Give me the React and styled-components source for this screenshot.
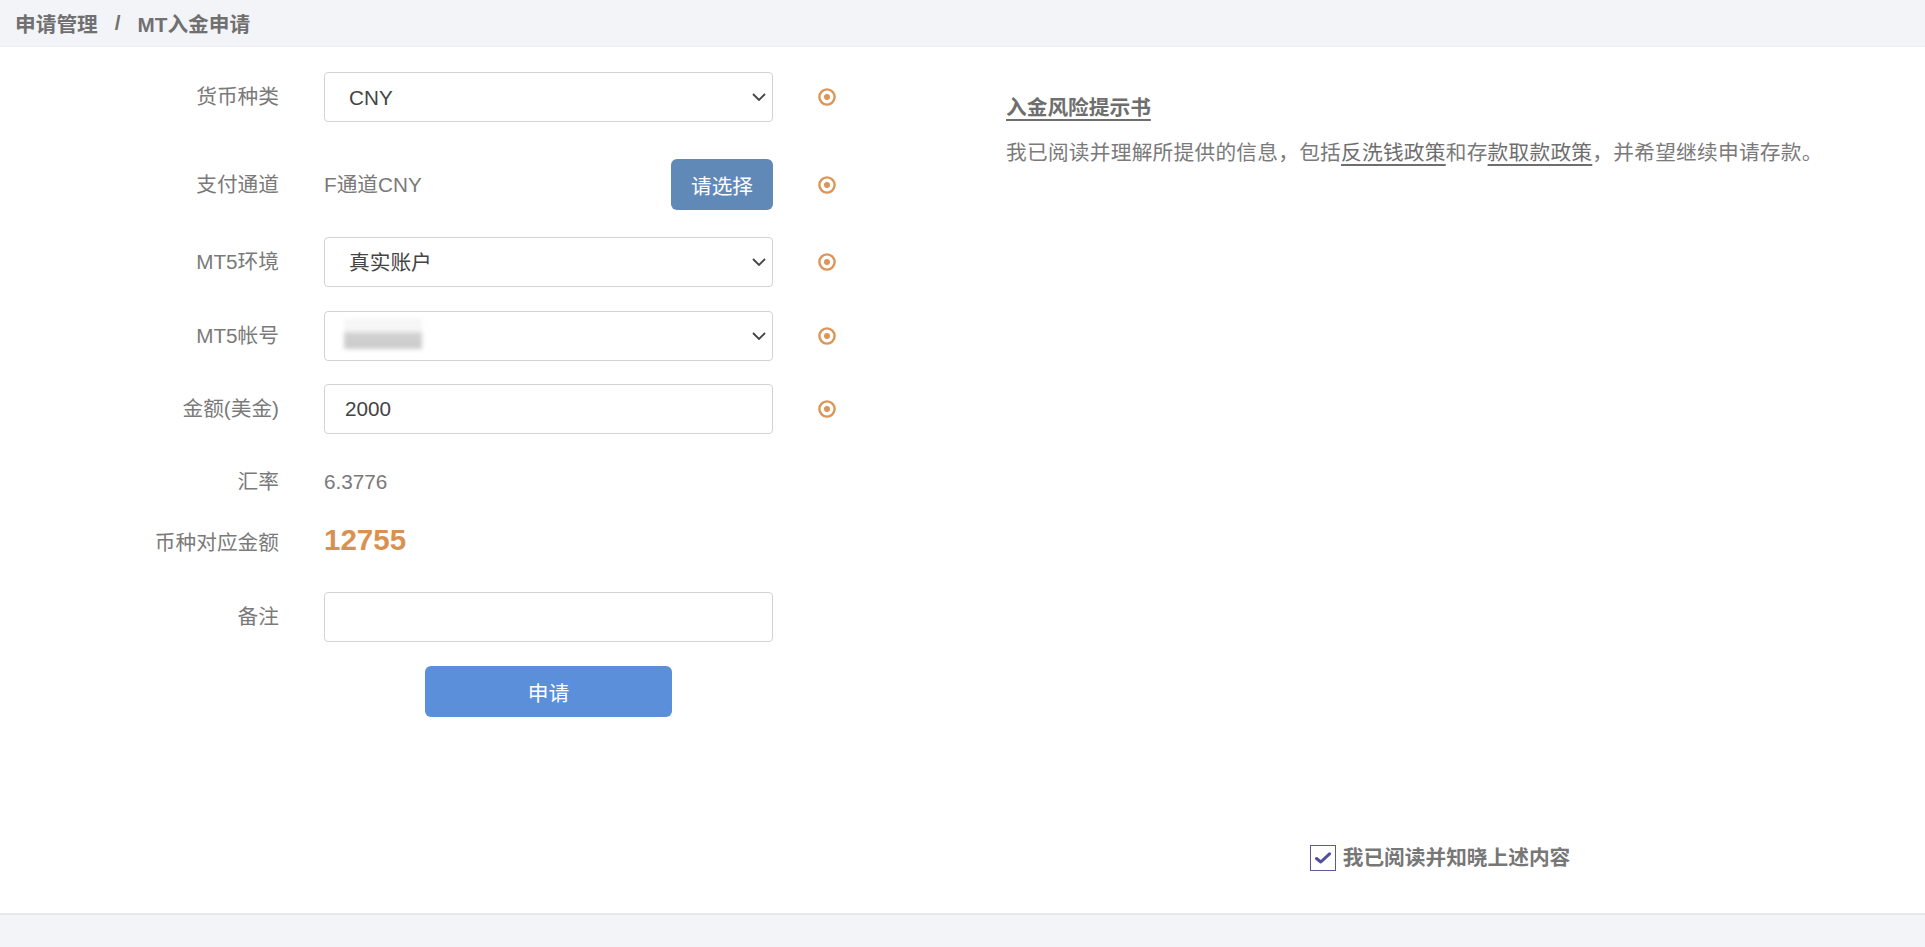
import styled, { createGlobalStyle } from 'styled-components';

const GlobalStyle = createGlobalStyle`
  html, body {
    margin: 0;
    padding: 0;
  }
  body {
    font-family: 'Liberation Sans', 'Noto Sans CJK SC', sans-serif;
    background: #ffffff;
    color: #777777;
  }
  * {
    box-sizing: border-box;
  }
`;

const Marker = () => (
  <Styled.Marker viewBox="0 0 18 18" aria-hidden="true">
    <circle cx="9" cy="9" r="7.6" fill="none" stroke="#dc9556" strokeWidth="2.4" />
    <circle cx="9" cy="9" r="3" fill="#dc9556" />
  </Styled.Marker>
);

const Chevron = () => (
  <Styled.Chevron viewBox="0 0 14 8" aria-hidden="true">
    <polyline points="1,1 7,7 13,1" fill="none" stroke="#444" strokeWidth="1.8" />
  </Styled.Chevron>
);

const SelectField = ({ value, children }) => (
  <Styled.SelectWrap>
    <Styled.Select defaultValue={value}>
      <option value={value}>{value}</option>
    </Styled.Select>
    {children}
    <Chevron />
  </Styled.SelectWrap>
);

const App = () => {
  return (
    <>
      <GlobalStyle />
      <Styled.Page>
        <Styled.Header>
          <span>申请管理</span>
          <Styled.Sep>/</Styled.Sep>
          <span>MT入金申请</span>
        </Styled.Header>

        <Styled.Main>
          <Styled.FormColumn>
            <Styled.Row $top={0}>
              <Styled.Label>货币种类</Styled.Label>
              <Styled.Field>
                <SelectField value="CNY" />
              </Styled.Field>
              <Marker />
            </Styled.Row>

            <Styled.Row $top={37} $height={51}>
              <Styled.Label>支付通道</Styled.Label>
              <Styled.Field>
                <Styled.Text>F通道CNY</Styled.Text>
                <Styled.PickButton type="button">请选择</Styled.PickButton>
              </Styled.Field>
              <Marker />
            </Styled.Row>

            <Styled.Row $top={27}>
              <Styled.Label>MT5环境</Styled.Label>
              <Styled.Field>
                <SelectField value="真实账户" />
              </Styled.Field>
              <Marker />
            </Styled.Row>

            <Styled.Row $top={24}>
              <Styled.Label>MT5帐号</Styled.Label>
              <Styled.Field>
                <SelectField value="">
                  <Styled.Blurred />
                </SelectField>
              </Styled.Field>
              <Marker />
            </Styled.Row>

            <Styled.Row $top={23}>
              <Styled.Label>金额(美金)</Styled.Label>
              <Styled.Field>
                <Styled.Input defaultValue="2000" />
              </Styled.Field>
              <Marker />
            </Styled.Row>

            <Styled.Row $top={23}>
              <Styled.Label>汇率</Styled.Label>
              <Styled.Field>
                <Styled.Text>6.3776</Styled.Text>
              </Styled.Field>
            </Styled.Row>

            <Styled.Row $top={11}>
              <Styled.Label>币种对应金额</Styled.Label>
              <Styled.Field>
                <Styled.Amount>12755</Styled.Amount>
              </Styled.Field>
            </Styled.Row>

            <Styled.Row $top={24}>
              <Styled.Label>备注</Styled.Label>
              <Styled.Field>
                <Styled.Input defaultValue="" />
              </Styled.Field>
            </Styled.Row>

            <Styled.Row $top={24} $height={51}>
              <Styled.Label />
              <Styled.Field $center>
                <Styled.SubmitButton type="button">申请</Styled.SubmitButton>
              </Styled.Field>
            </Styled.Row>
          </Styled.FormColumn>

          <Styled.InfoColumn>
            <Styled.Title>入金风险提示书</Styled.Title>
            <Styled.Paragraph>
              我已阅读并理解所提供的信息，包括<Styled.Link>反洗钱政策</Styled.Link>和存
              <Styled.Link>款取款政策</Styled.Link>，并希望继续申请存款。
            </Styled.Paragraph>
            <Styled.Agree>
              <Styled.CheckBox>
                <svg viewBox="0 0 16 12" width="16" height="12" aria-hidden="true">
                  <polyline
                    points="1.5,6.5 5.8,10 14.5,1.8"
                    fill="none"
                    stroke="#4f4f9c"
                    strokeWidth="3"
                    strokeLinecap="round"
                    strokeLinejoin="round"
                  />
                </svg>
              </Styled.CheckBox>
              <Styled.AgreeText>我已阅读并知晓上述内容</Styled.AgreeText>
            </Styled.Agree>
          </Styled.InfoColumn>
        </Styled.Main>

        <Styled.Footer />
      </Styled.Page>
    </>
  );
};

const Styled = {
  Page: styled.div`
    min-height: 100vh;
    display: flex;
    flex-direction: column;
  `,
  Header: styled.header`
    height: 47px;
    flex: none;
    display: flex;
    align-items: center;
    padding-left: 15px;
    padding-bottom: 1px;
    background: #f3f4f8;
    border-bottom: 1px solid #ecedf0;
    font-size: 20.7px;
    font-weight: bold;
    color: #707070;
  `,
  Sep: styled.span`
    margin: 0 17px;
  `,
  Main: styled.main`
    flex: 1;
    display: flex;
    background: #ffffff;
  `,
  FormColumn: styled.section`
    width: 1006px;
    flex: none;
    padding-top: 25px;
  `,
  Row: styled.div`
    display: flex;
    align-items: center;
    height: ${(p) => p.$height || 50}px;
    margin-top: ${(p) => p.$top}px;
  `,
  Label: styled.label`
    width: 279px;
    flex: none;
    text-align: right;
    font-size: 20.7px;
    color: #7a7a7a;
    line-height: 30px;
  `,
  Field: styled.div`
    width: 449px;
    height: 100%;
    margin-left: 45px;
    display: flex;
    align-items: center;
    justify-content: ${(p) => (p.$center ? 'center' : 'space-between')};
  `,
  Marker: styled.svg`
    width: 18px;
    height: 18px;
    margin-left: 45px;
    flex: none;
  `,
  SelectWrap: styled.div`
    position: relative;
    width: 100%;
    height: 100%;
  `,
  Select: styled.select`
    appearance: none;
    width: 100%;
    height: 100%;
    padding: 0 40px 0 24px;
    border: 1px solid #d3d3d3;
    border-radius: 4px;
    background: #ffffff;
    font-family: 'Liberation Sans', 'Noto Sans CJK SC', sans-serif;
    font-size: 20.7px;
    color: #444444;
    outline: none;
  `,
  Chevron: styled.svg`
    position: absolute;
    right: 7px;
    top: 21px;
    width: 14px;
    height: 8px;
    pointer-events: none;
  `,
  Blurred: styled.span`
    position: absolute;
    left: 20px;
    top: 8px;
    width: 78px;
    height: 30px;
    background: linear-gradient(
      to bottom,
      rgba(235, 235, 235, 0.5) 0%,
      rgba(238, 238, 238, 0.5) 40%,
      #d2d2d2 48%,
      #cbcbcb 100%
    );
    filter: blur(2px);
    pointer-events: none;
  `,
  Input: styled.input`
    width: 100%;
    height: 100%;
    padding: 0 20px;
    border: 1px solid #d3d3d3;
    border-radius: 4px;
    font-family: 'Liberation Sans', 'Noto Sans CJK SC', sans-serif;
    font-size: 20.7px;
    color: #444444;
    outline: none;
  `,
  Text: styled.span`
    font-size: 20.7px;
    color: #7a7a7a;
    line-height: 30px;
  `,
  Amount: styled.span`
    font-size: 29.5px;
    font-weight: bold;
    color: #d9914f;
    line-height: 34px;
    padding-bottom: 7px;
  `,
  PickButton: styled.button`
    width: 102px;
    height: 51px;
    border: none;
    border-radius: 6px;
    background: #6189b8;
    color: #ffffff;
    font-family: 'Liberation Sans', 'Noto Sans CJK SC', sans-serif;
    font-size: 20.7px;
    cursor: pointer;
  `,
  SubmitButton: styled.button`
    width: 247px;
    height: 51px;
    border: none;
    border-radius: 6px;
    background: #5b8fda;
    color: #ffffff;
    font-family: 'Liberation Sans', 'Noto Sans CJK SC', sans-serif;
    font-size: 20.7px;
    cursor: pointer;
  `,
  InfoColumn: styled.section`
    width: 868px;
    flex: none;
    display: flex;
    flex-direction: column;
    padding-top: 46px;
    padding-bottom: 40px;
  `,
  Title: styled.h3`
    margin: 0;
    font-size: 20.7px;
    font-weight: bold;
    line-height: 30px;
    color: #6e6e6e;
    text-decoration: underline;
    text-underline-offset: 4px;
  `,
  Paragraph: styled.p`
    margin: 15px 0 0;
    font-size: 20.7px;
    letter-spacing: 0.25px;
    line-height: 30px;
    color: #7a7a7a;
    white-space: nowrap;
  `,
  Link: styled.span`
    color: #6e6e6e;
    text-decoration: underline;
    text-underline-offset: 4px;
  `,
  Agree: styled.label`
    margin-top: auto;
    align-self: center;
    display: flex;
    align-items: center;
    gap: 7px;
    cursor: pointer;
  `,
  CheckBox: styled.span`
    width: 26px;
    height: 26px;
    border: 1.5px solid #5a5a9a;
    display: flex;
    align-items: center;
    justify-content: center;
    background: #ffffff;
  `,
  AgreeText: styled.span`
    font-size: 20.7px;
    font-weight: bold;
    color: #777777;
    line-height: 30px;
  `,
  Footer: styled.footer`
    height: 34px;
    flex: none;
    background: #f3f4f8;
    border-top: 2px solid #e8e8eb;
  `,
};

export default App;
